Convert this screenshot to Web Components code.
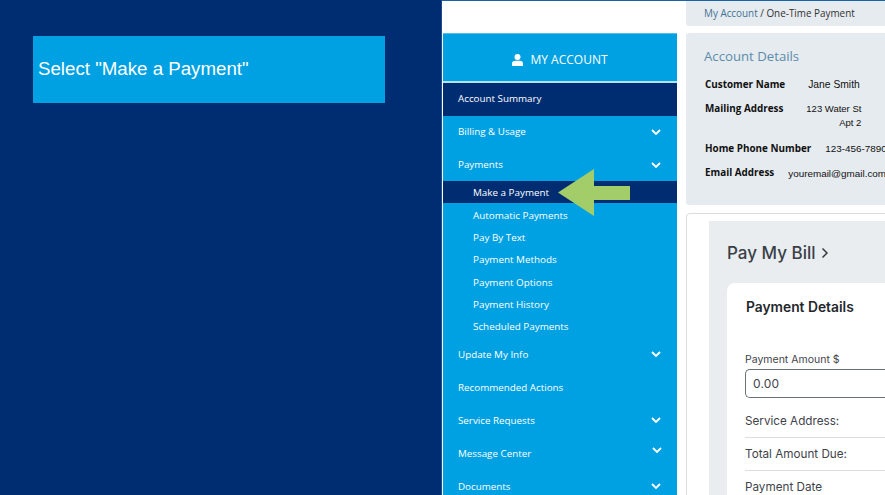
<!DOCTYPE html>
<html><head><meta charset="utf-8"><title>Make a Payment</title>
<style>
html,body{margin:0;padding:0;width:885px;height:495px;overflow:hidden;background:#002d72}
</style></head>
<body>
<tutorial-page>
  <tutorial-callout slot="left">Select "Make a Payment"</tutorial-callout>
  <account-sidebar slot="side"></account-sidebar>
  <account-main slot="main"></account-main>
</tutorial-page>
<script>
const chevron = `<svg width="10" height="7" viewBox="0 0 10 7" fill="none" stroke="#fff" stroke-width="1.8"><path d="M1 1l4 4 4-4"/></svg>`;
function def(name, css, html){
  customElements.define(name, class extends HTMLElement{
    connectedCallback(){
      if(this.shadowRoot) return;
      const r=this.attachShadow({mode:'open'});
      r.innerHTML=`<style>${css}</style>${typeof html==='function'?html(this):html}`;
    }
  });
}
def('tutorial-page',`
:host{display:flex;width:885px;height:495px;overflow:hidden;position:relative}
.left{width:442px;flex:none;background:#002d72;padding:36px 0 0 33px;box-sizing:border-box;border-right:1px solid #1c4a8c}
.right{flex:1;min-width:0;background:#fff;border-top:1px solid #1763a8;display:flex;gap:9px;box-sizing:border-box;padding-left:1px;overflow:hidden}
.arrow{position:absolute;left:558px;top:169px}
`,`<div class="left"><slot name="left"></slot></div>
<div class="right"><slot name="side"></slot><slot name="main"></slot></div>
<svg class="arrow" width="73" height="48" viewBox="0 0 73 48"><path d="M0 23.500L36 0V17H72V31H36V47Z" fill="#a2cd69"/></svg>`);
def('tutorial-callout',`
:host{display:flex;align-items:center;width:352px;height:67px;box-sizing:border-box;padding:0 0 1px 5px;background:#00a1e2;color:#fff;font:18.700px/24px "Liberation Sans",Arial,sans-serif}
`,`<slot></slot>`);
const rows=['Billing &amp; Usage','Payments'];
const subs=['Make a Payment','Automatic Payments','Pay By Text','Payment Methods','Payment Options','Payment History','Scheduled Payments'];
const after=[['Update My Info',1],['Recommended Actions',0],['Service Requests',1],['Message Center',1],['Documents',1]];
def('nav-row',`
:host{display:flex;align-items:center;justify-content:space-between;height:33px;box-sizing:border-box;padding:0 16px 0 15px;color:#fff;font:400 9.800px/14px "Open Sans",sans-serif}
:host([active]){background:#002d72}
:host([top]) span{margin-top:-2px}
:host([up]) svg{position:relative;top:-3px;left:1px}
:host([active]) span{margin-top:-2px}
svg{display:block}
`,(el)=>`<span><slot></slot></span>${el.hasAttribute('chev')?chevron:''}`);
def('nav-sub',`
:host{display:flex;align-items:center;height:22.350px;padding-left:30px;color:#fff;font:400 9.850px/14px "Open Sans",sans-serif}
:host([active]){background:#002d72}
`,`<slot></slot>`);
def('account-sidebar',`
:host{display:block;width:234px;flex:none;margin-top:32px;height:470px;background:#00a1e2;border-top:1px solid #4dbdea;box-sizing:border-box;overflow:hidden}
.head{height:49px;display:flex;align-items:center;justify-content:center;gap:7px;padding-top:5px;box-sizing:border-box;color:#fff;font:400 12px/16px "Open Sans",sans-serif;border-bottom:2px solid #b5e3f6}
.subs{display:block;margin:-1px 0 1px}
`,`<div class="head"><svg width="11" height="12" viewBox="0 0 11 12" fill="#fff"><circle cx="5.500" cy="3" r="3"/><path d="M0 12V9.600C0 7.800 1.400 6.800 3 6.800h5c1.600 0 3 1 3 2.800V12z"/></svg><span>MY ACCOUNT</span></div>
<nav-row active>Account Summary</nav-row>
${rows.map(r=>`<nav-row top chev>${r}</nav-row>`).join('')}
<div class="subs">${subs.map((s,i)=>`<nav-sub ${i==0?'active':''}>${s}</nav-sub>`).join('')}</div>
${after.map(r=>`<nav-row ${r[1]?'chev':''} ${r[0]=='Message Center'?'up':''}>${r[0]}</nav-row>`).join('')}`);
def('account-main',`
:host{display:block;flex:none;width:300px;font-family:"Open Sans",sans-serif}
.crumb{height:25px;background:#e6ebef;border-radius:0 0 3px 3px;box-sizing:border-box;padding:5px 0 0 18px;font-size:9.900px;line-height:14px;color:#333}
.crumb a{color:#3e7296}
.details{margin-top:7px;height:172px;background:#e6ebef;border-radius:3px;box-sizing:border-box;padding:14px 0 0 19px}
h2{margin:0 0 12px -1px;font:400 13.200px/18px "Open Sans",sans-serif;color:#5b8bab}
.row{display:flex;color:#111;font-size:9.900px}
.row b{font-weight:700;line-height:14px;flex:none}
.row span{font-family:"Liberation Sans",sans-serif;line-height:14px;text-align:right;white-space:nowrap}
.card{margin-top:8px;height:300px;border:1px solid #ddd;border-radius:4px;padding:7px 0 0 22px;box-sizing:border-box;background:#fff}
.panel{background:#e9edf0;height:300px;padding:21px 0 0 18px;box-sizing:border-box}
.title{font:500 17px/22px Inter,sans-serif;color:#3a3f47;display:flex;align-items:center;gap:5px}
.inner{margin-top:19px;background:#fff;border-radius:8px 0 0 0;height:240px;padding:14px 0 0 18px;box-sizing:border-box;font-family:Inter,sans-serif;color:#3f444b}
.pd{font:600 13.800px/20px Inter,sans-serif;color:#23272c;margin-left:1px}
label{display:block;margin-top:36px;font-size:10.500px;line-height:14px}
.input{margin-top:2px;height:29px;width:200px;box-sizing:border-box;border:1px solid #6b7075;border-right:0;border-radius:5px 0 0 5px;padding-left:7px;display:flex;align-items:center;font-size:12px;letter-spacing:.2px}
.line{font-size:11.700px;line-height:16px;padding:8px 0;border-bottom:1px solid #dcdfe2}
.input + .line{margin-top:7px}
.line:last-child{border:0}
`,`<div class="crumb"><a>My Account</a> / One-Time Payment</div>
<section class="details">
<h2>Account Details</h2>
<div class="row" style="margin-bottom:10px"><b>Customer Name</b><span style="margin-left:23px;position:relative;top:1px;font-size:10.300px">Jane Smith</span></div>
<div class="row" style="margin-bottom:12px"><b>Mailing Address</b><span style="margin-left:22px;width:56px;position:relative;top:1px;font-size:9.500px">123 Water St<br>Apt 2</span></div>
<div class="row" style="margin-bottom:10px"><b>Home Phone Number</b><span style="margin-left:14px;position:relative;top:1px">123-456-7890</span></div>
<div class="row"><b>Email Address</b><span style="margin-left:14px;position:relative;top:2px">youremail@gmail.com</span></div>
</section>
<section class="card"><div class="panel">
<div class="title">Pay My Bill<svg width="8" height="12" viewBox="0 0 8 12" fill="none" stroke="#3a3f47" stroke-width="1.500"><path d="M1.500 1.500L6 6l-4.500 4.500"/></svg></div>
<div class="inner">
<div class="pd">Payment Details</div>
<label>Payment Amount $</label>
<div class="input">0.00</div>
<div class="line">Service Address:</div>
<div class="line">Total Amount Due:</div>
<div class="line">Payment Date</div>
</div></div></section>`);
</script>
</body></html>
